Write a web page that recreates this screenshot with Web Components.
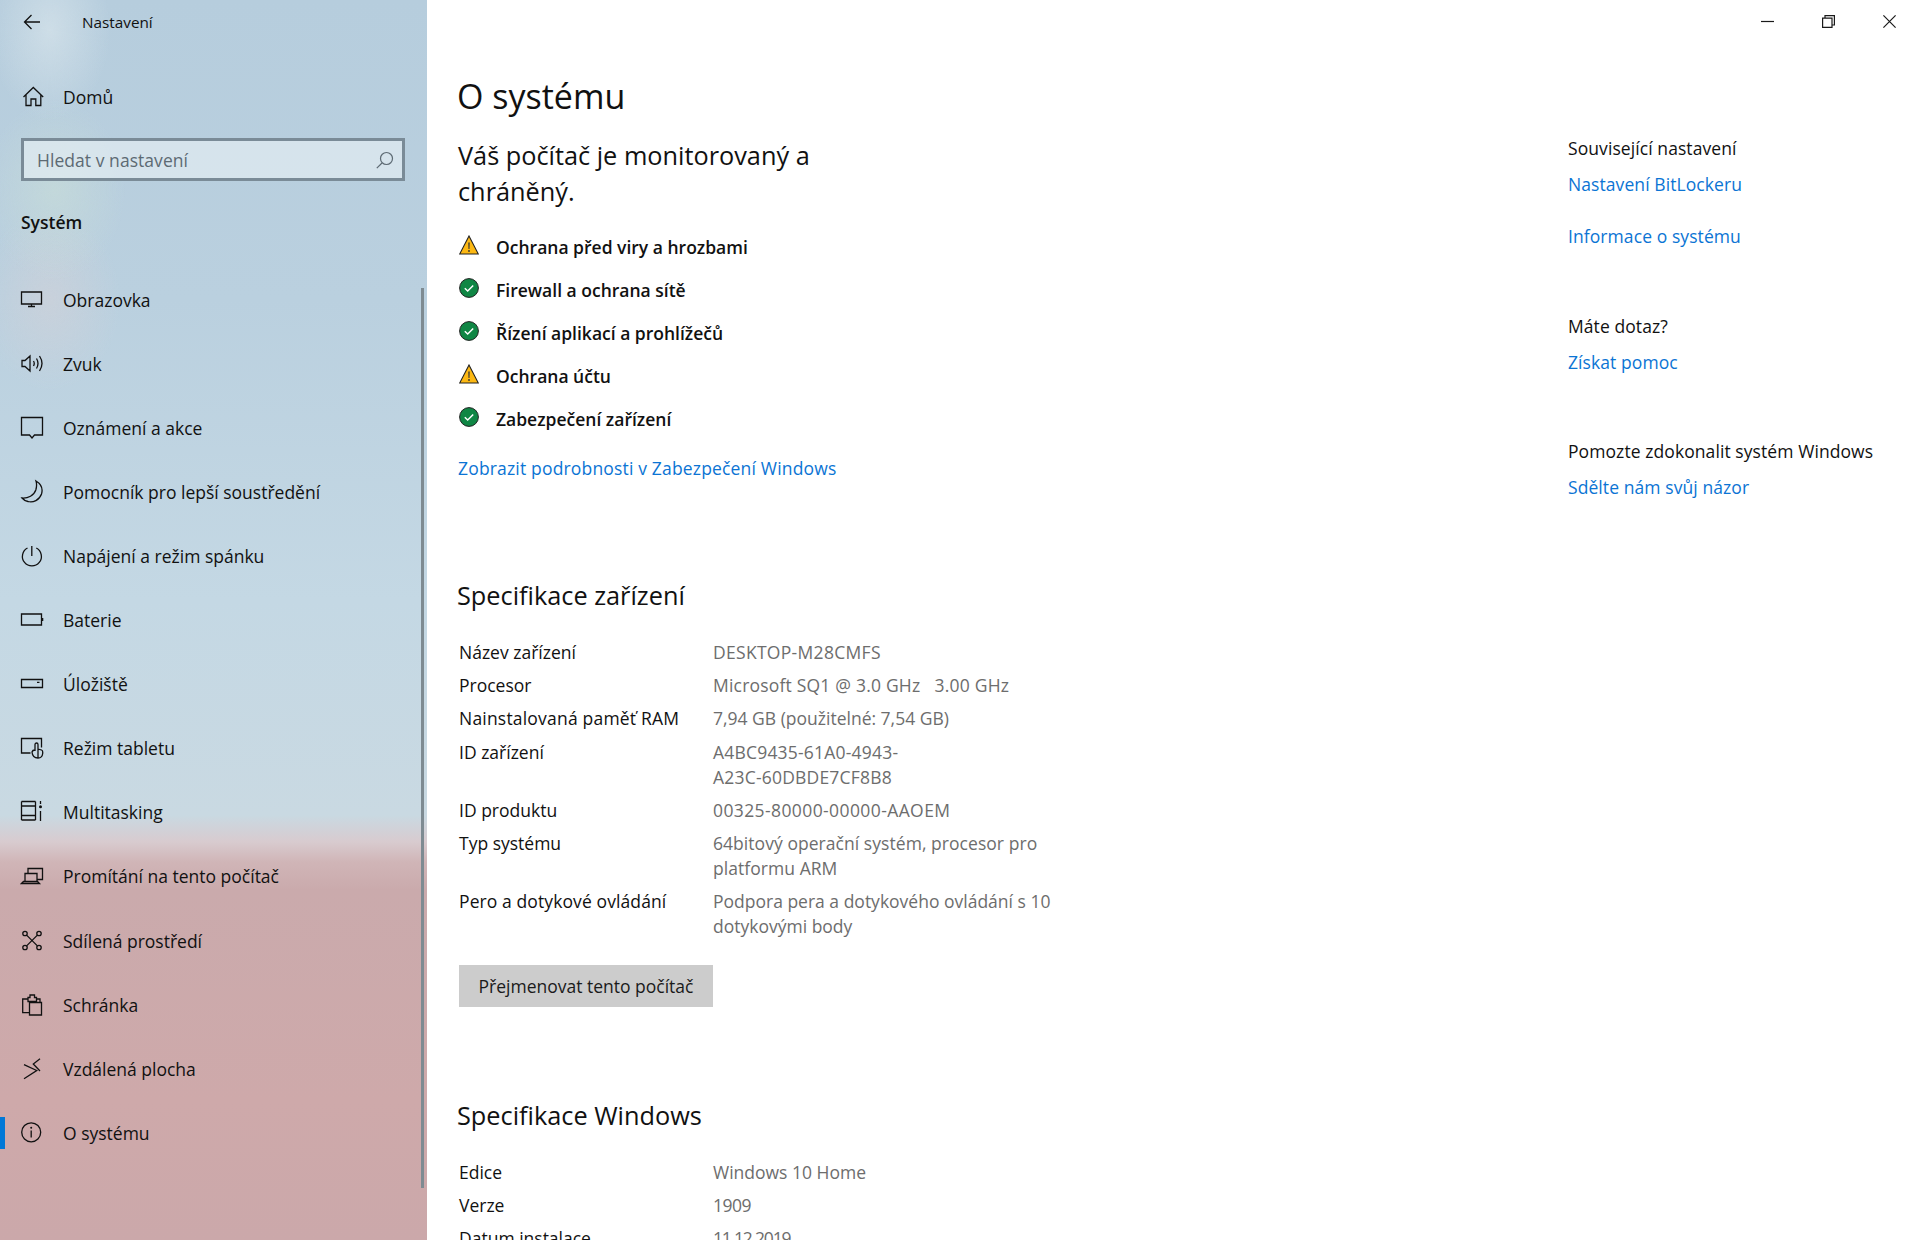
<!DOCTYPE html>
<html lang="cs">
<head>
<meta charset="utf-8">
<title>Nastavení</title>
<style>
  html, body { margin: 0; height: 100%; overflow: hidden; background: #fff; }
  body { font-family: "Open Sans", "Noto Sans", sans-serif; color: #111; }
</style>
</head>
<body>
<settings-app>
  <settings-sidebar slot="side">
    <nav-item icon="display">Obrazovka</nav-item>
    <nav-item icon="sound">Zvuk</nav-item>
    <nav-item icon="notify">Oznámení a akce</nav-item>
    <nav-item icon="moon">Pomocník pro lepší soustředění</nav-item>
    <nav-item icon="power">Napájení a režim spánku</nav-item>
    <nav-item icon="battery">Baterie</nav-item>
    <nav-item icon="storage">Úložiště</nav-item>
    <nav-item icon="tablet">Režim tabletu</nav-item>
    <nav-item icon="multi">Multitasking</nav-item>
    <nav-item icon="project">Promítání na tento počítač</nav-item>
    <nav-item icon="shared">Sdílená prostředí</nav-item>
    <nav-item icon="clip">Schránka</nav-item>
    <nav-item icon="remote">Vzdálená plocha</nav-item>
    <nav-item icon="info" active>O systému</nav-item>
  </settings-sidebar>
  <window-controls slot="bar"></window-controls>
  <about-page slot="main">
    <security-row state="warn">Ochrana před viry a hrozbami</security-row>
    <security-row state="ok">Firewall a ochrana sítě</security-row>
    <security-row state="ok">Řízení aplikací a prohlížečů</security-row>
    <security-row state="warn">Ochrana účtu</security-row>
    <security-row state="ok">Zabezpečení zařízení</security-row>
    <spec-table slot="device">
      <spec-row label="Název zařízení" style="--ls:.3px">DESKTOP-M28CMFS</spec-row>
      <spec-row label="Procesor" style="--ls:.2px">Microsoft SQ1 @ 3.0 GHz &nbsp; 3.00 GHz</spec-row>
      <spec-row label="Nainstalovaná paměť RAM" style="--lab-ls:.2px">7,94 GB (použitelné: 7,54 GB)</spec-row>
      <spec-row label="ID zařízení" style="--ls:.2px">A4BC9435-61A0-4943-<br>A23C-60DBDE7CF8B8</spec-row>
      <spec-row label="ID produktu" style="--ls:.4px">00325-80000-00000-AAOEM</spec-row>
      <spec-row label="Typ systému" style="--ls:.05px">64bitový operační systém, procesor pro<br>platformu ARM</spec-row>
      <spec-row label="Pero a dotykové ovládání" style="--lab-ls:.1px">Podpora pera a dotykového ovládání s 10<br>dotykovými body</spec-row>
    </spec-table>
    <spec-table slot="windows">
      <spec-row label="Edice">Windows 10 Home</spec-row>
      <spec-row label="Verze" style="--ls:-.5px">1909</spec-row>
      <spec-row label="Datum instalace" style="--ls:-1.2px">11.12.2019</spec-row>
    </spec-table>
  </about-page>
  <related-panel slot="aside">
    <related-group heading="Související nastavení"><a>Nastavení BitLockeru</a><a>Informace o systému</a></related-group>
    <related-group heading="Máte dotaz?"><a>Získat pomoc</a></related-group>
    <related-group heading="Pomozte zdokonalit systém Windows"><a>Sdělte nám svůj názor</a></related-group>
  </related-panel>
</settings-app>

<script>
const ICONS = {
	home: '<path d="M3.500 13 13.300 3.500 23.200 13M6 10.800V21.500h5v-6.500h4.800v6.500h5V10.800"/>',
	display: '<path d="M1.500 5h20v12h-20zM11.500 17v2.500M8 19.500h7"/>',
	sound: '<path d="M2 9.500h3l5-4.500v15l-5-4.500H2zM13.500 10q1.500 2.500 0 5M16.500 7.500q3 5 0 10M19.500 5q5 7.500 0 15"/>',
	notify: '<path d="M1.500 2.500h21V20h-8l-2.500 3-2.500-3h-8z"/>',
	moon: '<path d="M16 2C21 5 23 10 21.500 15 19.500 21 13 24 8 22.500 5.500 22 3.500 20.800 2 19 8 19.500 14 16.500 15.800 11 16.800 7.500 16.800 4.500 16 2z"/>',
	power: '<path d="M7.500 5A9.500 9.500 0 1 0 16.300 5M11.800 3v10"/>',
	battery: '<path d="M1.500 7h20v11h-20z"/><path d="M22 11h1.300v3H22z" fill="currentColor" stroke="none"/>',
	storage: '<path d="M1.500 8.500h21v8h-21zM17 11.300h2.500"/>',
	tablet: '<path d="M10.500 18H1.500V3.500h20v9"/><path d="M15 16V9.500a1.500 1.500 0 0 1 3 0V14l3.500 1q1.300.5 1.200 2v1.500q-.5 4.500-4.700 4.500-5.500 0-6-6 .5-2 3-2M18 9.800v13"/>',
	multi: '<path d="M1.500 2.500h14M1.500 7h14v9.500h-14zM1.500 21h14M1.500 2.500V7M15.500 2.500V7M1.500 16.500V21M15.500 16.500V21M20.500 2v3M20.500 12v10"/><circle cx="20.500" cy="7.800" r="1.500" fill="currentColor" stroke="none"/>',
	project: '<path d="M8 10V5.500h14.500v11H17M5 18.500v-8h12v8M1.500 20.500h18l-2-2h-14z"/>',
	shared: '<circle cx="5" cy="5.500" r="2.200"/><circle cx="19" cy="5.500" r="2.200"/><circle cx="5" cy="19.500" r="2.200"/><circle cx="19" cy="19.500" r="2.200"/><path d="M6.600 7.100l10.800 10.800M17.400 7.100 6.600 17.900"/>',
	clip: '<path d="M9.500 20.700H2.700V7H8M16.500 7h3.500v3.500M8 9.500v-4h2V3h4.500v2.500h2v4zM9.500 10.500h12V23h-12z"/>',
	remote: '<path d="M4 8.700l12.700 5.800L4 22.700M20 2.700 13.300 8l6.700 7"/>',
	info: '<circle cx="11.200" cy="12.300" r="9.500"/><path d="M11.200 10.500v7"/><circle cx="11.200" cy="7.700" r="1" fill="currentColor" stroke="none"/>',
};

const navIcon = name => `<svg width="24" height="24" viewBox="0 0 24 24" fill="none" stroke="currentColor" stroke-width="1.300">${ICONS[name]}</svg>`;

class SettingsApp extends HTMLElement {
	constructor() {
		super();
		this.attachShadow({ mode: 'open' });
		this.shadowRoot.innerHTML = `
		<style>
			:host { display: grid; grid-template-columns: 427px 1fr; height: 100vh; overflow: hidden; }
			.right { display: flex; flex-direction: column; min-width: 0; }
			.cols { display: grid; grid-template-columns: 1141px 1fr; flex: 1; min-height: 0; }
		</style>
		<slot name="side"></slot>
		<div class="right">
			<slot name="bar"></slot>
			<div class="cols">
				<slot name="main"></slot>
				<slot name="aside"></slot>
			</div>
		</div>`;
	}
}

class SettingsSidebar extends HTMLElement {
	constructor() {
		super();
		this.attachShadow({ mode: 'open' });
		this.shadowRoot.innerHTML = `
		<style>
			:host {
				display: block; position: relative; height: 100%; overflow: hidden; color: #111;
				background:
					radial-gradient(ellipse 60px 90px at 50px 30px, rgba(215,228,235,.7), transparent),
					radial-gradient(ellipse 70px 90px at 55px 190px, rgba(205,225,215,.5), transparent),
					radial-gradient(ellipse 70px 90px at 50px 300px, rgba(215,210,215,.5), transparent),
					linear-gradient(180deg, #b6cddd 0, #bad0df 300px, #c4d8e4 600px, #c9d9e2 815px, #d8cbcf 842px, #d0b5b7 862px, #caaaac 890px, #cea9aa 1100px, #cba8aa 1240px);
			}
			.head { display: flex; align-items: center; height: 44px; }
			.back { display: flex; margin-left: 23px; }
			.title { margin-left: 41px; font-size: 15.300px; }
			.search { display: flex; align-items: center; justify-content: space-between; box-sizing: border-box; width: 384px; height: 43px; margin: 9px 0 0 21px; padding: 0 8px 0 13px; border: 3px solid #7a8b97; background: rgba(232,240,245,.62); color: #5d6a73; font-size: 17.500px; letter-spacing: .05px; }
			h2 { margin: 0; padding: 0 0 0 21px; height: 87px; line-height: 82px; box-sizing: border-box; font-size: 17.500px; font-weight: 600; }
			.scroll { position: absolute; left: 421px; top: 288px; width: 3px; height: 900px; background: #7e8b92; }
		</style>
		<div class="head"><span class="back"><svg width="18" height="18" viewBox="0 0 18 18" fill="none" stroke="currentColor" stroke-width="1.300"><path d="M17 9H1.500M8.500 2 1.500 9l7 7"/></svg></span><span class="title">Nastavení</span></div>
		<nav-item icon="home" style="margin-top:21px">Domů</nav-item>
		<div class="search"><span>Hledat v nastavení</span><svg width="18" height="18" viewBox="0 0 18 18" fill="none" stroke="currentColor" stroke-width="1.200"><circle cx="10.500" cy="7.500" r="6"/><path d="M6 12 .8 17.200"/></svg></div>
		<h2>Systém</h2>
		<slot></slot>
		<div class="scroll"></div>`;
	}
}

class NavItem extends HTMLElement {
	constructor() {
		super();
		this.attachShadow({ mode: 'open' });
		this.shadowRoot.innerHTML = `
		<style>
			:host { display: flex; align-items: center; position: relative; height: 64.060px; font-size: 17.500px; padding-left: 20px; }
			.icon { display: flex; width: 24px; margin-right: 19px; transform: translateY(-1px); }
			.mark { position: absolute; left: 0; top: 16px; width: 5px; height: 32px; background: #0078d7; }
		</style>
		<span class="icon"></span><slot></slot>`;
	}

	connectedCallback() {
		this.shadowRoot.querySelector('.icon').innerHTML = navIcon(this.getAttribute('icon'));
		if (this.hasAttribute('active')) {
			const mark = document.createElement('span');
			mark.className = 'mark';
			this.shadowRoot.appendChild(mark);
		}
	}
}

class WindowControls extends HTMLElement {
	constructor() {
		super();
		this.attachShadow({ mode: 'open' });
		this.shadowRoot.innerHTML = `
		<style>
			:host { display: flex; justify-content: flex-end; height: 42px; flex: none; }
			span { display: flex; align-items: center; justify-content: center; width: 61px; }
		</style>
		<span><svg width="13" height="13" fill="none" stroke="#1a1a1a" stroke-width="1.200"><path d="M0 6.500h13"/></svg></span>
		<span><svg width="13" height="13" fill="none" stroke="#1a1a1a" stroke-width="1.200"><path d="M.6 3.100h9.400v9.300H.6zM3 3V.6h9.400v9.400h-2.300"/></svg></span>
		<span><svg width="13" height="13" fill="none" stroke="#1a1a1a" stroke-width="1.200"><path d="M.4.400l12.200 12.200M12.600.4.400 12.600"/></svg></span>`;
	}
}

class AboutPage extends HTMLElement {
	constructor() {
		super();
		this.attachShadow({ mode: 'open' });
		this.shadowRoot.innerHTML = `
		<style>
			:host { display: block; padding-left: 30px; }
			h1 { margin: 32px 0 0; font-size: 34px; font-weight: 400; line-height: 44px; height: 50px; color: #111; }
			.status { margin: 0 0 16.500px 1px; font-size: 25.300px; font-weight: 400; line-height: 36px; padding-top: 13px; color: #111; }
			a { display: block; margin: 13px 0 0 1px; font-size: 17.500px; line-height: 30px; color: #0b74d4; letter-spacing: .17px; }
			h3 { margin: 0; font-size: 25.300px; font-weight: 400; line-height: 36px; color: #111; }
			.device { margin-top: 94px; }
			.windows { margin-top: 90px; }
			.rows { margin-top: 23px; }
			button { display: block; margin: 21.300px 0 0 2px; width: 254px; height: 42px; padding: 0; border: 0; background: #ccc; color: #1a1a1a; font: inherit; font-size: 17.500px; }
		</style>
		<h1>O systému</h1>
		<div class="status">Váš počítač je monitorovaný a<br>chráněný.</div>
		<slot></slot>
		<a>Zobrazit podrobnosti v Zabezpečení Windows</a>
		<div class="device">
			<h3>Specifikace zařízení</h3>
			<div class="rows"><slot name="device"></slot></div>
			<button>Přejmenovat tento počítač</button>
		</div>
		<div class="windows">
			<h3>Specifikace Windows</h3>
			<div class="rows"><slot name="windows"></slot></div>
		</div>`;
	}
}

class SecurityRow extends HTMLElement {
	constructor() {
		super();
		this.attachShadow({ mode: 'open' });
		this.shadowRoot.innerHTML = `
		<style>
			:host { display: flex; align-items: center; height: 42.900px; font-size: 17.500px; font-weight: 600; color: #111; padding-left: 2px; }
			.icon { display: flex; margin-right: 17px; transform: translateY(-2px); flex: none; }
		</style>
		<span class="icon"></span><slot></slot>`;
	}

	connectedCallback() {
		const warn = `<svg width="20" height="20" viewBox="0 0 20 20"><path d="M10 1 19.300 19H.7z" fill="#fcb813" stroke="#222" stroke-width="1.100"/><path d="M9.300 7.500h1.400l-.2 6.500h-1z" fill="#333"/><circle cx="10" cy="16" r=".9" fill="#333"/></svg>`;
		const ok = `<svg width="20" height="20" viewBox="0 0 20 20"><circle cx="10" cy="10" r="9.400" fill="#0f8644" stroke="#222" stroke-width="1"/><path d="M5.800 10.300l2.900 2.700 5.500-5.500" fill="none" stroke="#fff" stroke-width="1.500"/></svg>`;
		this.shadowRoot.querySelector('.icon').innerHTML = this.getAttribute('state') === 'warn' ? warn : ok;
	}
}

class SpecTable extends HTMLElement {
	constructor() {
		super();
		this.attachShadow({ mode: 'open' });
		this.shadowRoot.innerHTML = `
		<style>:host { display: block; padding-left: 2px; }</style>
		<slot></slot>`;
	}
}

class SpecRow extends HTMLElement {
	constructor() {
		super();
		this.attachShadow({ mode: 'open' });
		this.shadowRoot.innerHTML = `
		<style>
			:host { display: grid; grid-template-columns: 254px 1fr; font-size: 17.500px; line-height: 25px; padding: 4.100px 0; color: #111; }
			.lab { letter-spacing: var(--lab-ls, 0); }
			.val { color: #6d6d6d; letter-spacing: var(--ls, 0); }
		</style>
		<span class="lab"></span><span class="val"><slot></slot></span>`;
	}

	connectedCallback() {
		this.shadowRoot.querySelector('.lab').textContent = this.getAttribute('label');
	}
}

class RelatedPanel extends HTMLElement {
	constructor() {
		super();
		this.attachShadow({ mode: 'open' });
		this.shadowRoot.innerHTML = `
		<style>:host { display: block; padding-top: 88px; white-space: nowrap; }</style>
		<slot></slot>`;
	}
}

class RelatedGroup extends HTMLElement {
	constructor() {
		super();
		this.attachShadow({ mode: 'open' });
		this.shadowRoot.innerHTML = `
		<style>
			:host { display: block; margin-bottom: 53.500px; font-size: 17.500px; line-height: 36px; color: #111; letter-spacing: .08px; }
			::slotted(a) { display: block; color: #0b74d4; margin-bottom: 16px; }
			::slotted(a:last-child) { margin-bottom: 0; }
		</style>
		<div class="head"></div><slot></slot>`;
	}

	connectedCallback() {
		this.shadowRoot.querySelector('.head').textContent = this.getAttribute('heading');
	}
}

customElements.define('settings-app', SettingsApp);
customElements.define('settings-sidebar', SettingsSidebar);
customElements.define('nav-item', NavItem);
customElements.define('window-controls', WindowControls);
customElements.define('about-page', AboutPage);
customElements.define('security-row', SecurityRow);
customElements.define('spec-table', SpecTable);
customElements.define('spec-row', SpecRow);
customElements.define('related-panel', RelatedPanel);
customElements.define('related-group', RelatedGroup);
</script>
</body>
</html>
